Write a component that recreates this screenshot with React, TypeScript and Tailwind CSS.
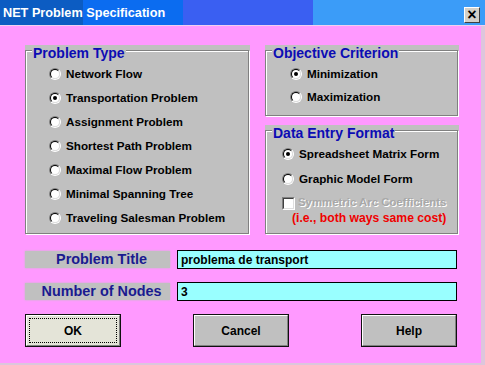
import React from 'react';

const Radio = ({ checked }: { checked?: boolean }) => (
  <span className="flex w-3 h-3 shrink-0 rounded-full border border-t-[#808080] border-l-[#808080] border-r-white border-b-white">
    <span className="flex flex-1 items-center justify-center rounded-full bg-white border border-t-black border-l-black border-r-[#dfdfdf] border-b-[#dfdfdf]">
      {checked && <span className="w-1 h-1 rounded-full bg-black" />}
    </span>
  </span>
);

const Option = ({ label, checked, tall }: { label: string; checked?: boolean; tall?: boolean }) => (
  <div className={tall ? 'flex items-center gap-[5px] h-[25px]' : 'flex items-center gap-[5px] h-[24px]'}>
    <Radio checked={checked} />
    <span className="text-[11.7px] font-bold text-black leading-none">{label}</span>
  </div>
);

const Frame = ({
  title,
  className,
  children
}: {
  title: string;
  className: string;
  children: React.ReactNode;
}) => (
  <div className={`relative bg-[#c0c0c0] pt-[5px] ${className}`}>
    <div className="h-full mr-px mb-px border border-[#808080] shadow-[inset_1px_1px_0_#fff,1px_1px_0_#fff]">
      {children}
    </div>
    {/* caption sits over the frame line */}
    <span className="absolute left-[7px] top-0 bg-[#c0c0c0] px-px text-[14px] leading-[16px] font-bold text-[#0c0cb4]">
      {title}
    </span>
  </div>
);

const Field = ({ label, value }: { label: string; value: string }) => (
  <div className="flex items-center h-[19px]">
    <div className="flex items-center justify-center w-[145px] h-[17px] pl-[8px] bg-[#c0c0c0] shadow-[0_0_2px_#c0c0c0]">
      <span className="text-[14.4px] font-bold text-[#1a1a90] leading-none">{label}</span>
    </div>
    <div className="ml-[7px] flex items-center w-[280px] h-[19px] pl-[3px] bg-[#99ffff] border border-black">
      <span className="text-[12px] font-bold text-black leading-none">{value}</span>
    </div>
  </div>
);

const Button = ({ label, focused }: { label: string; focused?: boolean }) => (
  <button
    className={
      focused
        ? 'flex w-[96px] h-[33px] border border-[#101010] bg-[#e4e4d8]'
        : 'flex w-[96px] h-[33px] border border-[#101010] bg-[#c0c0c0]'
    }
  >
    <div className="flex flex-1 border border-t-white border-l-white border-r-[#808080] border-b-[#808080]">
      <div
        className={
          focused
            ? 'flex flex-1 items-center justify-center m-[2px] border border-dotted border-black'
            : 'flex flex-1 items-center justify-center m-[2px] border border-transparent'
        }
      >
        <span className="text-[12px] font-bold text-black leading-none">{label}</span>
      </div>
    </div>
  </button>
);

export default function App() {
  return (
    <div className="w-[485px] h-[365px] overflow-hidden flex flex-col font-['Liberation_Sans',Arial,sans-serif] bg-[#ff99ff]">
      {/* Title bar */}
      <div className="flex items-center justify-between h-[26px] shrink-0 border-b border-[#f0d0f0] bg-[linear-gradient(90deg,#0c5cc2_0px,#0c5cc2_83px,#0b6cf0_83px,#0b6cf0_183px,#3a5ff2_183px,#3a5ff2_313px,#3b9cf8_313px)]">
        <span className="pl-[3px] pt-[1px] text-[12.7px] font-bold text-white leading-none">NET Problem Specification</span>
        <div className="mr-[5px] mt-[4px] flex items-center justify-center w-[16px] h-[16px] bg-[#d4d0c8] border border-t-white border-l-white border-r-[#404040] border-b-[#404040]">
          <span className="text-[16px] font-bold text-black leading-none">×</span>
        </div>
      </div>

      {/* Body */}
      <div className="flex-1 flex flex-col pl-[25px] pt-[19px] border-r-[4px] border-b-[2px] border-[#dcc6dc]">
        <div className="flex gap-[15px]">
          <Frame title="Problem Type" className="w-[225px] h-[189px]">
            <div className="flex flex-col pt-[11px] pl-[23px]">
              <Option label="Network Flow" />
              <Option label="Transportation Problem" checked />
              <Option label="Assignment Problem" />
              <Option label="Shortest Path Problem" />
              <Option label="Maximal Flow Problem" />
              <Option label="Minimal Spanning Tree" />
              <Option label="Traveling Salesman Problem" />
            </div>
          </Frame>

          <div className="flex flex-col gap-[9px]">
            <Frame title="Objective Criterion" className="w-[194px] h-[71px]">
              <div className="flex flex-col pt-[11px] pl-[24px]">
                <div className="flex items-center gap-[5px] h-[23px]">
                  <Radio checked />
                  <span className="text-[11.7px] font-bold text-black leading-none">Minimization</span>
                </div>
                <div className="flex items-center gap-[5px] h-[23px]">
                  <Radio />
                  <span className="text-[11.7px] font-bold text-black leading-none">Maximization</span>
                </div>
              </div>
            </Frame>

            <Frame title="Data Entry Format" className="w-[194px] h-[109px]">
              <div className="flex flex-col pt-[11px] pl-[16px]">
                <Option label="Spreadsheet Matrix Form" checked />
                <Option label="Graphic Model Form" tall />
                <div className="flex items-center gap-[3px] h-[16px] mt-[4px]">
                  <span className="flex w-[13px] h-[13px] border border-t-[#808080] border-l-[#808080] border-r-white border-b-white">
                    <span className="flex-1 bg-white border border-t-[#404040] border-l-[#404040] border-r-[#dfdfdf] border-b-[#dfdfdf]" />
                  </span>
                  <span className="text-[11.4px] font-bold text-[#a8a8a8] leading-none [text-shadow:1px_1px_0_#fff]">
                    Symmetric Arc Coefficients
                  </span>
                </div>
                <span className="ml-[10px] text-[12.2px] font-bold text-[#f00000] leading-[14px]">
                  (i.e., both ways same cost)
                </span>
              </div>
            </Frame>
          </div>
        </div>

        <div className="flex flex-col gap-[13px] mt-[16px]">
          <Field label="Problem Title" value="problema de transport" />
          <Field label="Number of Nodes" value="3" />
        </div>

        <div className="flex justify-between w-[432px] mt-[13px]">
          <Button label="OK" focused />
          <Button label="Cancel" />
          <Button label="Help" />
        </div>
      </div>
    </div>
  );
}
